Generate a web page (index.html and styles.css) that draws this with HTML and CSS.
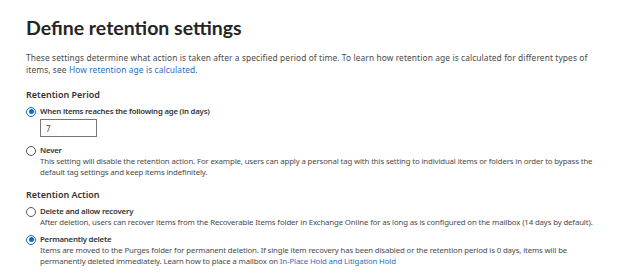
FILE: index.html
```html
<!DOCTYPE html>
<html lang="en">
<head>
  <meta charset="UTF-8">
  <title>Define retention settings</title>
  <link rel="stylesheet" href="styles.css">
</head>
<body>
  <main class="page">
    <h1>Define retention settings</h1>
    <p class="intro">These settings determine what action is taken after a specified period of time. To learn how retention age is calculated for different types of items, see <a href="#">How retention age is calculated</a>.</p>

    <section class="group">
      <h2>Retention Period</h2>
      <div class="option">
        <span class="radio checked"></span>
        <div class="option-body">
          <div class="option-label">When items reaches the following age (in days)</div>
          <input class="days" type="text" value="7">
        </div>
      </div>
      <div class="option">
        <span class="radio"></span>
        <div class="option-body">
          <div class="option-label">Never</div>
          <div class="option-desc">This setting will disable the retention action. For example, users can apply a personal tag with this setting to individual items or folders in order to bypass the default tag settings and keep items indefinitely.</div>
        </div>
      </div>
    </section>

    <section class="group">
      <h2>Retention Action</h2>
      <div class="option">
        <span class="radio"></span>
        <div class="option-body">
          <div class="option-label">Delete and allow recovery</div>
          <div class="option-desc">After deletion, users can recover items from the Recoverable Items folder in Exchange Online for as long as is configured on the mailbox (14 days by default).</div>
        </div>
      </div>
      <div class="option">
        <span class="radio checked"></span>
        <div class="option-body">
          <div class="option-label">Permanently delete</div>
          <div class="option-desc">Items are moved to the Purges folder for permanent deletion. If single item recovery has been disabled or the retention period is 0 days, items will be permanently deleted immediately. Learn how to place a mailbox on <a href="#">In-Place Hold and Litigation Hold</a></div>
        </div>
      </div>
    </section>
  </main>
</body>
</html>
```

FILE: styles.css
```css
/* General styles */
body {
  margin: 0;
  padding: 0;
  background-color: white;
  font-family: "Noto Sans", "Open Sans", sans-serif;
  color: #4a4a4a;
}
.page {
  padding: 14px 22px 0 26px;
  width: 576px;
}
h1 {
  margin: 0;
  font-family: Lato, "Noto Sans", sans-serif;
  font-size: 19.5px;
  line-height: 28px;
  font-weight: bold;
  color: #252525;
}
a {
  color: #1f6fc0;
  text-decoration: none;
}
.intro {
  margin: 10px 0 0 0;
  width: 566px;
  font-size: 8.4px;
  letter-spacing: 0.1px;
  line-height: 12px;
}

/* Option groups */
.group {
  margin-top: 13px;
}
.group + .group {
  margin-top: 11px;
}
.group h2 {
  margin: 0 0 5px 0;
  font-size: 9px;
  line-height: 12px;
  font-weight: 600;
  color: #333;
}
.option {
  display: flex;
  gap: 4px;
  margin-bottom: 6px;
}
.option-body {
  width: 560px;
}
.radio {
  flex: none;
  box-sizing: border-box;
  width: 10px;
  height: 10px;
  margin-top: 0.5px;
  border: 1px solid #555;
  border-radius: 50%;
  position: relative;
}
.radio.checked {
  border-color: #0f6cbd;
}
.radio.checked::after {
  content: "";
  position: absolute;
  top: 1.5px;
  left: 1.5px;
  width: 5px;
  height: 5px;
  border-radius: 50%;
  background-color: #0f6cbd;
}
.option-label {
  font-size: 7.8px;
  letter-spacing: -0.2px;
  line-height: 11px;
  font-weight: 600;
  color: #333;
}
.option-desc {
  font-size: 7.8px;
  letter-spacing: -0.13px;
  line-height: 11px;
}
.days {
  display: block;
  box-sizing: border-box;
  margin: 2px 0 2px 0;
  width: 57px;
  height: 18px;
  padding: 0 5px;
  border: 1px solid #777;
  border-radius: 0;
  font-family: inherit;
  font-size: 8px;
  color: #444;
}
```
